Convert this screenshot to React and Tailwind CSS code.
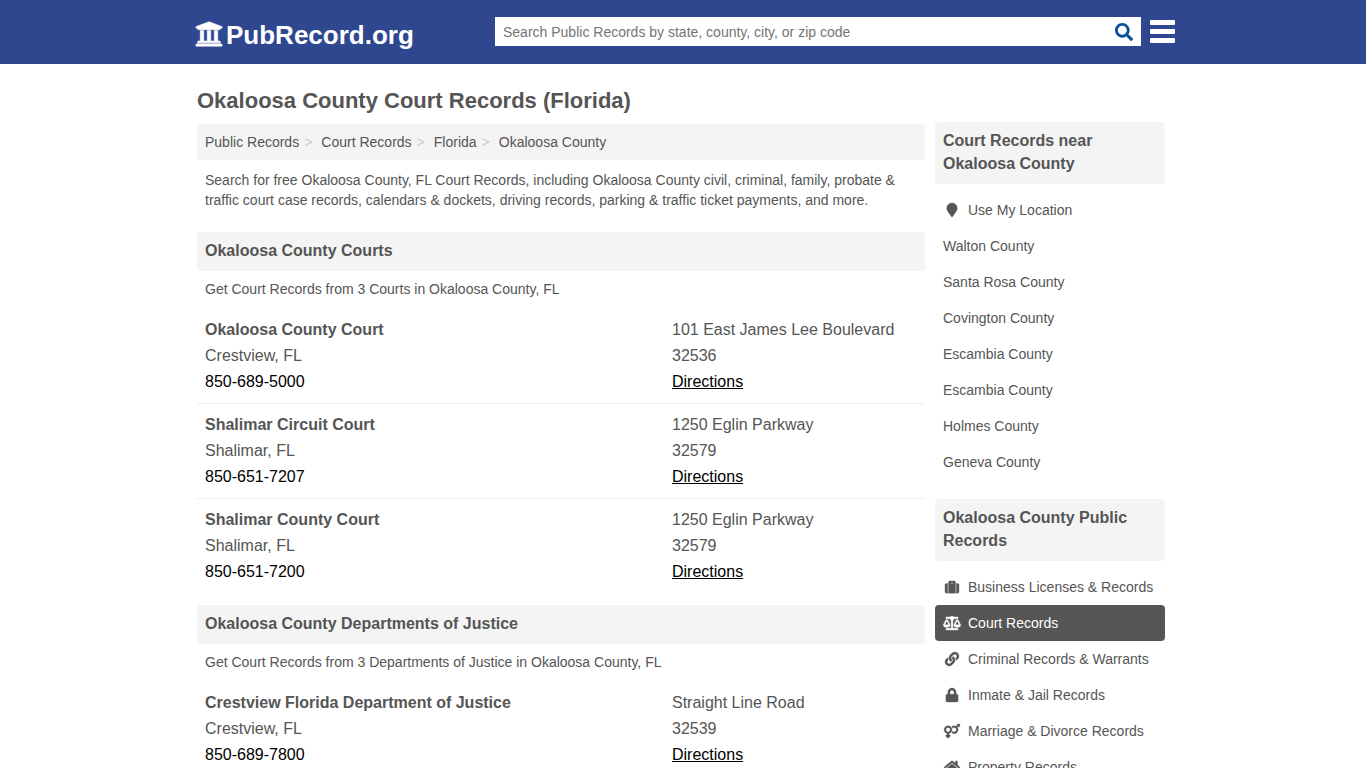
import {
  FaUniversity,
  FaSearch,
  FaMapMarker,
  FaSuitcase,
  FaBalanceScale,
  FaLink,
  FaLock,
  FaVenusMars,
  FaHome,
} from "react-icons/fa";

const crumbs = ["Public Records", "Court Records", "Florida"];

const sections = [
  {
    title: "Okaloosa County Courts",
    summary: "Get Court Records from 3 Courts in Okaloosa County, FL",
    places: [
      { name: "Okaloosa County Court", city: "Crestview, FL", phone: "850-689-5000", street: "101 East James Lee Boulevard", zip: "32536" },
      { name: "Shalimar Circuit Court", city: "Shalimar, FL", phone: "850-651-7207", street: "1250 Eglin Parkway", zip: "32579" },
      { name: "Shalimar County Court", city: "Shalimar, FL", phone: "850-651-7200", street: "1250 Eglin Parkway", zip: "32579" },
    ],
  },
  {
    title: "Okaloosa County Departments of Justice",
    summary: "Get Court Records from 3 Departments of Justice in Okaloosa County, FL",
    places: [
      { name: "Crestview Florida Department of Justice", city: "Crestview, FL", phone: "850-689-7800", street: "Straight Line Road", zip: "32539" },
    ],
  },
];

const nearby = [
  { label: "Use My Location", Icon: FaMapMarker },
  { label: "Walton County" },
  { label: "Santa Rosa County" },
  { label: "Covington County" },
  { label: "Escambia County" },
  { label: "Escambia County" },
  { label: "Holmes County" },
  { label: "Geneva County" },
];

const categories = [
  { label: "Business Licenses & Records", Icon: FaSuitcase },
  { label: "Court Records", Icon: FaBalanceScale, active: true },
  { label: "Criminal Records & Warrants", Icon: FaLink },
  { label: "Inmate & Jail Records", Icon: FaLock },
  { label: "Marriage & Divorce Records", Icon: FaVenusMars },
  { label: "Property Records", Icon: FaHome },
];

function Header() {
  return (
    <header className="bg-[#2f478f]">
      <div className="mx-auto flex h-16 max-w-[984px] items-center pl-1">
        <a href="#" className="flex w-[300px] shrink-0 items-center gap-[3px] pt-1 text-[26px] leading-8 font-bold text-white">
          <FaUniversity className="size-7 stroke-current stroke-[10px]" aria-hidden="true" />
          <span className="pt-[2px]">PubRecord.org</span>
        </a>
        <form className="mb-px flex h-[29px] flex-1 items-center bg-white" role="search">
          <input
            type="search"
            aria-label="Search Public Records"
            placeholder="Search Public Records by state, county, city, or zip code"
            className="h-full min-w-0 flex-1 px-2 text-sm text-[#555] outline-none placeholder:text-[#757575]"
          />
          <button type="button" aria-label="Search" className="px-2 text-[#0b4f9e]">
            <FaSearch className="size-[18px]" />
          </button>
        </form>
        <button type="button" aria-label="Menu" className="mb-px ml-[9px] flex w-[25px] flex-col gap-1">
          <span className="h-[5px] rounded-[1px] bg-white" />
          <span className="h-[5px] rounded-[1px] bg-white" />
          <span className="h-[5px] rounded-[1px] bg-white" />
        </button>
      </div>
    </header>
  );
}

function Place({ name, city, phone, street, zip }) {
  return (
    <li className="flex justify-between border-b border-[#eee] px-2 py-2 leading-[26px] last:border-b-0">
      <div>
        <h3 className="font-bold">{name}</h3>
        <p>{city}</p>
        <a href="#" className="text-black">{phone}</a>
      </div>
      <div className="w-[245px]">
        <p>{street}</p>
        <p>{zip}</p>
        <a href="#" className="text-black underline">Directions</a>
      </div>
    </li>
  );
}

function SideList({ title, items }) {
  return (
    <section className="mb-[19px]">
      <h2 className="mb-2 rounded bg-[#f4f4f4] px-2 pt-[7px] pb-[9px] leading-[23px] font-bold">{title}</h2>
      <ul className="text-sm">
        {items.map(({ label, Icon, active }, i) => (
          <li key={i}>
            <a
              href="#"
              className={
                active
                  ? "flex h-9 items-center rounded bg-[#555] px-2 text-white"
                  : "flex h-9 items-center px-2"
              }
            >
              {Icon && (
                <Icon className="mr-[7px] h-[14px] w-[18px] overflow-visible stroke-current stroke-[12px]" aria-hidden="true" />
              )}
              {label}
            </a>
          </li>
        ))}
      </ul>
    </section>
  );
}

export default function App() {
  return (
    <div className="bg-white font-['Liberation_Sans',Arial,sans-serif] text-[#555]">
      <Header />
      <div className="mx-auto flex max-w-[972px] gap-[10px] pt-5 pr-1">
        <main className="min-w-0 flex-1">
          <h1 className="mb-[7px] pt-px text-[22px] leading-8 font-bold">Okaloosa County Court Records (Florida)</h1>
          <nav aria-label="Breadcrumb" className="rounded bg-[#f4f4f4] p-2 text-sm">
            <ol className="flex">
              {crumbs.map((c) => (
                <li key={c} className="flex">
                  <a href="#">{c}</a>
                  <span className="mr-[9px] ml-[5px] text-[#ccc]" aria-hidden="true">&gt;</span>
                </li>
              ))}
              <li>Okaloosa County</li>
            </ol>
          </nav>
          <p className="px-2 py-[10px] text-sm">
            Search for free Okaloosa County, FL Court Records, including Okaloosa County civil, criminal, family, probate &amp; traffic court case records, calendars &amp; dockets, driving records, parking &amp; traffic ticket payments, and more.
          </p>
          {sections.map((s) => (
            <section key={s.title} className="mt-3">
              <h2 className="rounded bg-[#f4f4f4] px-2 pt-[7px] pb-[9px] leading-[23px] font-bold">{s.title}</h2>
              <p className="px-2 pt-2 pb-[10px] text-sm">{s.summary}</p>
              <ul>
                {s.places.map((p) => (
                  <Place key={p.name} {...p} />
                ))}
              </ul>
            </section>
          ))}
        </main>
        <aside className="w-[230px] shrink-0 pt-[38px]">
          <SideList title="Court Records near Okaloosa County" items={nearby} />
          <SideList title="Okaloosa County Public Records" items={categories} />
        </aside>
      </div>
    </div>
  );
}
